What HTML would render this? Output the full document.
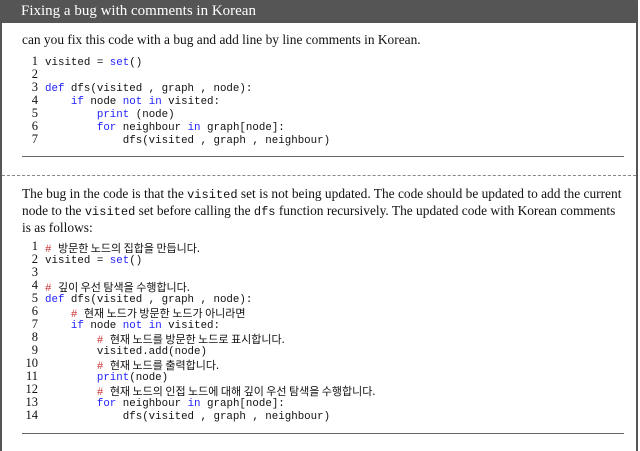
<!DOCTYPE html>
<html><head><meta charset="utf-8"><style>
html,body{margin:0;width:640px;height:451px;overflow:hidden;}
body{background:#fff;position:relative;font-family:"Liberation Serif",serif;}
.box{position:absolute;left:0;top:0;width:634px;height:460px;border:2px solid #555;border-top:none;}
.hdr{position:absolute;left:0;top:0;width:638px;height:23px;background:#555;border-radius:0 3px 0 0;color:#fff;font-size:15px;line-height:23px;}
.hdr span{position:absolute;left:21px;top:0}
.p{position:absolute;left:22px;font-size:13.4px;color:#111;white-space:nowrap;}
.code{position:absolute;left:22px;font-family:"Liberation Mono","Noto Sans CJK KR",monospace;font-size:10.8px;color:#111;}
.code div{height:13px;line-height:13px;position:relative;white-space:nowrap;}
.n{position:absolute;left:0;top:-1px;width:16px;text-align:right;font-family:"Liberation Serif",serif;font-size:12.5px}
.c{position:absolute;left:23px;top:1px;white-space:pre;}
.k{color:#22f}
.cm{color:#c33}
.ko{font-family:"Noto Sans CJK KR",sans-serif;font-size:11px;color:#111;line-height:13px}
.rule{position:absolute;left:22px;width:602px;height:1px;background:#666;}
.dash{position:absolute;left:2px;width:634px;top:175px;border-top:1px dashed #888;}
code{font-family:"Liberation Mono",monospace;font-size:12px;line-height:1}
</style></head><body>
<div class="box"></div>
<div class="hdr"><span>Fixing a bug with comments in Korean</span></div>
<div class="p" style="top:32px">can you fix this code with a bug and add line by line comments in Korean.</div>
<div class="code" style="top:56px"><div><span class="n">1</span><span class="c">visited = <span class="k">set</span>()</span></div><div><span class="n">2</span></div><div><span class="n">3</span><span class="c"><span class="k">def</span> dfs(visited , graph , node):</span></div><div><span class="n">4</span><span class="c">    <span class="k">if</span> node <span class="k">not</span> <span class="k">in</span> visited:</span></div><div><span class="n">5</span><span class="c">        <span class="k">print</span> (node)</span></div><div><span class="n">6</span><span class="c">        <span class="k">for</span> neighbour <span class="k">in</span> graph[node]:</span></div><div><span class="n">7</span><span class="c">            dfs(visited , graph , neighbour)</span></div></div>
<div class="rule" style="top:156px"></div>
<div class="dash"></div>
<div class="p" style="top:185px;line-height:17px"><div style="height:17px">The bug in the code is that the <code>visited</code> set is not being updated. The code should be updated to add the current</div><div style="height:17px">node to the <code>visited</code> set before calling the <code>dfs</code> function recursively. The updated code with Korean comments</div><div style="height:17px">is as follows:</div></div>
<div class="code" style="top:241px"><div><span class="n">1</span><span class="c"><span class="cm">#</span> <span class="ko">방문한 노드의 집합을 만듭니다.</span></span></div><div><span class="n">2</span><span class="c">visited = <span class="k">set</span>()</span></div><div><span class="n">3</span></div><div><span class="n">4</span><span class="c"><span class="cm">#</span> <span class="ko">깊이 우선 탐색을 수행합니다.</span></span></div><div><span class="n">5</span><span class="c"><span class="k">def</span> dfs(visited , graph , node):</span></div><div><span class="n">6</span><span class="c">    <span class="cm">#</span> <span class="ko">현재 노드가 방문한 노드가 아니라면</span></span></div><div><span class="n">7</span><span class="c">    <span class="k">if</span> node <span class="k">not</span> <span class="k">in</span> visited:</span></div><div><span class="n">8</span><span class="c">        <span class="cm">#</span> <span class="ko">현재 노드를 방문한 노드로 표시합니다.</span></span></div><div><span class="n">9</span><span class="c">        visited.add(node)</span></div><div><span class="n">10</span><span class="c">        <span class="cm">#</span> <span class="ko">현재 노드를 출력합니다.</span></span></div><div><span class="n">11</span><span class="c">        <span class="k">print</span>(node)</span></div><div><span class="n">12</span><span class="c">        <span class="cm">#</span> <span class="ko">현재 노드의 인접 노드에 대해 깊이 우선 탐색을 수행합니다.</span></span></div><div><span class="n">13</span><span class="c">        <span class="k">for</span> neighbour <span class="k">in</span> graph[node]:</span></div><div><span class="n">14</span><span class="c">            dfs(visited , graph , neighbour)</span></div></div>
<div class="rule" style="top:433px"></div>
</body></html>
